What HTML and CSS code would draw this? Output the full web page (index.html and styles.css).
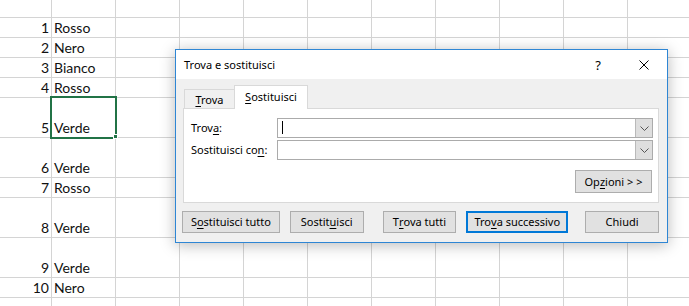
FILE: index.html
```html
<!DOCTYPE html>
<html lang="it">
<head>
    <meta charset="UTF-8">
    <title>Trova e sostituisci</title>
    <link rel="stylesheet" href="styles.css">
</head>
<body>
    <div class="sheet">
        <div class="row top"></div>
        <div class="row"><span class="num">1</span><span class="val">Rosso</span></div>
        <div class="row"><span class="num">2</span><span class="val">Nero</span></div>
        <div class="row"><span class="num">3</span><span class="val">Bianco</span></div>
        <div class="row"><span class="num">4</span><span class="val">Rosso</span></div>
        <div class="row tall"><span class="num">5</span><span class="val active">Verde</span></div>
        <div class="row tall"><span class="num">6</span><span class="val">Verde</span></div>
        <div class="row"><span class="num">7</span><span class="val">Rosso</span></div>
        <div class="row tall"><span class="num">8</span><span class="val">Verde</span></div>
        <div class="row tall"><span class="num">9</span><span class="val">Verde</span></div>
        <div class="row"><span class="num">10</span><span class="val">Nero</span></div>
        <div class="row"></div>
    </div>

    <!-- finestra di dialogo sopra il foglio -->
    <div class="dialog">
        <div class="titlebar">
            <span class="title">Trova e sostituisci</span>
            <span class="tbtn help">?</span>
            <span class="tbtn">
                <svg width="10" height="10" viewBox="0 0 10 10"><path d="M0.5 0.5 L9.5 9.5 M9.5 0.5 L0.5 9.5" stroke="#000" stroke-width="1" fill="none"/></svg>
            </span>
        </div>
        <div class="dlg-body">
            <div class="tabs">
                <span class="tab"><u>T</u>rova</span>
                <span class="tab on"><u>S</u>ostituisci</span>
            </div>
            <div class="panel">
                <div class="fields">
                    <label>Trov<u>a</u>:</label>
                    <div class="combo"><span class="caret"></span><span class="drop"><svg width="9" height="5" viewBox="0 0 9 5"><path d="M0.5 0.5 L4.5 4.5 L8.5 0.5" stroke="#555" fill="none"/></svg></span></div>
                    <label>Sostituisci co<u>n</u>:</label>
                    <div class="combo"><span class="drop"><svg width="9" height="5" viewBox="0 0 9 5"><path d="M0.5 0.5 L4.5 4.5 L8.5 0.5" stroke="#555" fill="none"/></svg></span></div>
                </div>
                <div class="opts">
                    <span class="btn btn-opts">Op<u>z</u>ioni &gt; &gt;</span>
                </div>
            </div>
            <div class="actions">
                <span class="btn b-all">S<u>o</u>stituisci tutto</span>
                <span class="btn b-rep">Sostit<u>u</u>isci</span>
                <span class="btn b-find">T<u>r</u>ova tutti</span>
                <span class="btn b-next default">Tro<u>v</u>a successivo</span>
                <span class="btn b-close">Chiudi</span>
            </div>
        </div>
    </div>
</body>
</html>
```

FILE: styles.css
```css
* {
    padding: 0;
    margin: 0;
    box-sizing: border-box;
}
body {
    position: relative;
    width: 689px;
    height: 306px;
    overflow: hidden;
    background: #fff;
    font-family: Lato, "Liberation Sans", sans-serif;
}
u {
    text-decoration: underline;
    text-underline-offset: 2px;
}

/* foglio */
.sheet {
    height: 306px;
    background: linear-gradient(90deg, transparent 63px, #d4d4d4 63px) -12px 0 / 64px 100% repeat-x;
}
.row {
    display: grid;
    grid-template-columns: 52px 63px;
    height: 20px;
    border-bottom: 1px solid #d4d4d4;
    font-size: 14px;
    line-height: 16px;
    color: #111;
}
.row.top {
    height: 18px;
}
.row.tall {
    height: 40px;
}
.row .num,
.row .val {
    display: flex;
    align-items: flex-end;
    padding-bottom: 1px;
}
.row .num {
    justify-content: flex-end;
    padding-right: 3px;
}
.row .val {
    padding-left: 2px;
}
.val.active {
    position: relative;
}
.val.active::before {
    content: "";
    position: absolute;
    left: -2px;
    top: -2px;
    width: 67px;
    height: 43px;
    border: 2px solid #217346;
    box-sizing: border-box;
}
.val.active::after {
    content: "";
    position: absolute;
    left: 61px;
    top: 36px;
    width: 5px;
    height: 5px;
    background: #217346;
    border: 1px solid #fff;
    box-sizing: border-box;
}

/* dialogo */
.dialog {
    position: absolute;
    left: 175px;
    top: 49px;
    width: 493px;
    height: 194px;
    border: 1px solid #2e86d4;
    background: #f0f0f0;
    box-shadow: 0 2px 14px rgba(0, 0, 0, 0.28);
    font-family: "Noto Sans", "Liberation Sans", sans-serif;
    font-size: 11px;
    color: #000;
}
.titlebar {
    display: flex;
    align-items: center;
    height: 29px;
    background: #fff;
    padding-left: 8px;
}
.titlebar .title {
    flex: 1;
    font-size: 11px;
}
.titlebar .tbtn {
    display: flex;
    align-items: center;
    justify-content: center;
    width: 46px;
    height: 29px;
    font-size: 13px;
}
.dlg-body {
    padding: 6px 8px 9px 7px;
}
.tabs {
    display: flex;
    align-items: flex-end;
    height: 23px;
    padding-left: 1px;
}
.tab {
    width: 50px;
    height: 19px;
    padding-top: 2px;
    border: 1px solid #d9d9d9;
    border-bottom: none;
    border-right: none;
    line-height: 16px;
    text-align: center;
}
.tab.on {
    position: relative;
    z-index: 1;
    width: 74px;
    height: 24px;
    margin-bottom: -1px;
    padding-top: 3px;
    border-right: 1px solid #d9d9d9;
    background: #fff;
}
.panel {
    height: 95px;
    padding: 9px 5px 9px 7px;
    border: 1px solid #d9d9d9;
    background: #fff;
}
.fields {
    display: grid;
    grid-template-columns: 86px 1fr;
    row-gap: 2px;
    align-items: center;
}
.fields label {
    line-height: 16px;
}
.combo {
    position: relative;
    display: flex;
    justify-content: flex-end;
    height: 20px;
    border: 1px solid #ababab;
    background: #fff;
}
.combo .caret {
    position: absolute;
    left: 4px;
    top: 2px;
    width: 1px;
    height: 13px;
    background: #000;
}
.combo .drop {
    display: flex;
    align-items: center;
    justify-content: center;
    width: 17px;
    height: 18px;
    background: #dedede;
    border-left: 1px solid #b9b9b9;
}
.opts {
    display: flex;
    justify-content: flex-end;
    margin-top: 10px;
    padding-right: 1px;
}
.btn {
    display: flex;
    align-items: center;
    justify-content: center;
    height: 22px;
    border: 1px solid #adadad;
    background: #e1e1e1;
    line-height: 16px;
    white-space: nowrap;
}
.btn-opts {
    width: 77px;
    height: 23px;
}
.actions {
    display: flex;
    margin-top: 8px;
    margin-left: -1px;
}
.b-all {
    width: 98px;
}
.b-rep {
    width: 74px;
    margin-left: 10px;
}
.b-find {
    width: 74px;
    margin-left: 19px;
}
.b-next {
    width: 102px;
    margin-left: 10px;
}
.b-close {
    width: 74px;
    margin-left: 17px;
}
.btn.default {
    border: 2px solid #0078d7;
}
```
